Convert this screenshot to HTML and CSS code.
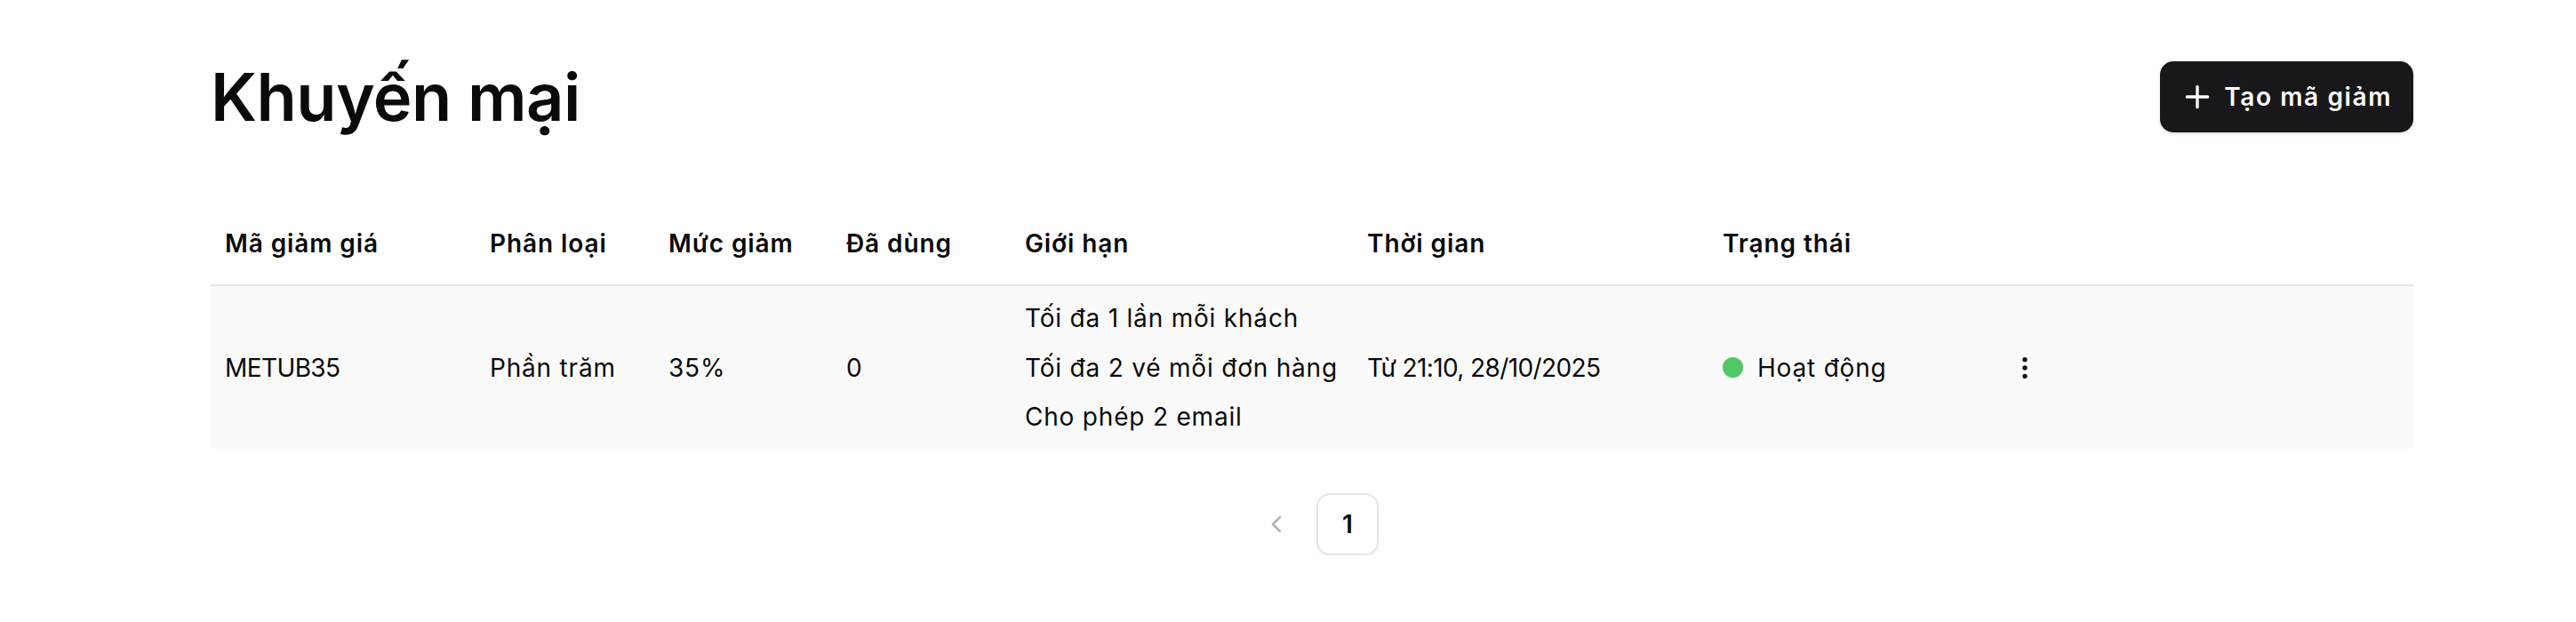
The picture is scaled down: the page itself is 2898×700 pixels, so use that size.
FILE: index.html
```html
<!DOCTYPE html>
<html lang="vi">
<head>
<meta charset="utf-8">
<title>Khuyến mại</title>
<link rel="stylesheet" href="styles.css">
</head>
<body>
<div class="page">
  <header class="top">
    <h1 class="title">Khuyến mại</h1>
    <button class="btn-primary" type="button">
      <svg class="btn-icon" viewBox="0 0 24 24" fill="none" stroke="currentColor" stroke-width="2" stroke-linecap="round" stroke-linejoin="round"><path d="M5 12h14"/><path d="M12 5v14"/></svg>
      <span>Tạo mã giảm</span>
    </button>
  </header>

  <div class="table">
    <div class="grid thead">
      <div class="th">Mã giảm giá</div>
      <div class="th">Phân loại</div>
      <div class="th">Mức giảm</div>
      <div class="th">Đã dùng</div>
      <div class="th">Giới hạn</div>
      <div class="th">Thời gian</div>
      <div class="th">Trạng thái</div>
      <div class="th"></div>
    </div>
    <div class="grid trow">
      <div class="td code">METUB35</div>
      <div class="td">Phần trăm</div>
      <div class="td">35%</div>
      <div class="td">0</div>
      <div class="td limits">
        <div class="limit">Tối đa 1 lần mỗi khách</div>
        <div class="limit">Tối đa 2 vé mỗi đơn hàng</div>
        <div class="limit">Cho phép 2 email</div>
      </div>
      <div class="td date">Từ 21:10, 28/10/2025</div>
      <div class="td status"><span class="dot"></span><span>Hoạt động</span></div>
      <div class="td actions">
        <svg class="more" viewBox="0 0 24 24" fill="none" stroke="currentColor" stroke-width="2" stroke-linecap="round" stroke-linejoin="round"><circle cx="12" cy="12" r="1"/><circle cx="12" cy="5" r="1"/><circle cx="12" cy="19" r="1"/></svg>
      </div>
    </div>
  </div>

  <nav class="pager">
    <button class="pg-btn pg-prev" type="button" aria-label="Trang trước">
      <svg viewBox="0 0 24 24" fill="none" stroke="currentColor" stroke-width="2" stroke-linecap="round" stroke-linejoin="round"><path d="m15 18-6-6 6-6"/></svg>
    </button>
    <button class="pg-btn pg-current" type="button">1</button>
  </nav>
</div>
</body>
</html>
```

FILE: styles.css
```css
* { box-sizing: border-box; }

html, body {
  margin: 0;
  background: #ffffff;
}

body {
  font-family: "Inter", "Noto Sans", sans-serif;
  color: #0a0a0a;
}

.page {
  width: 2715px;
  padding: 69px 0 0 237px;
}

.top {
  display: flex;
  align-items: center;
  justify-content: space-between;
  height: 79px;
  margin-bottom: 84px;
}

.title {
  margin: 0;
  font-size: 74px;
  font-weight: 600;
  line-height: 1;
  letter-spacing: -0.5px;
  color: #0a0a0a;
}

.btn-primary {
  display: flex;
  align-items: center;
  gap: 10px;
  height: 80px;
  padding: 0 24px 0 22px;
  border: none;
  border-radius: 15px;
  background: #18181a;
  color: #ffffff;
  font-family: inherit;
  font-size: 28px;
  font-weight: 600;
  letter-spacing: 1.6px;
  box-shadow: 0 2px 4px rgba(0, 0, 0, 0.12);
}

.btn-icon {
  width: 40px;
  height: 40px;
}

.grid {
  display: grid;
  grid-template-columns: 298px 201px 200px 201px 385px 400px 324px 1fr;
}

.thead {
  border-bottom: 2px solid #e5e5e5;
}

.th {
  padding: 22px 16px 26px;
  font-size: 28px;
  line-height: 40px;
  font-weight: 600;
  color: #0a0a0a;
  letter-spacing: 0.9px;
}

.trow {
  background: #fafafa;
}

.td {
  display: flex;
  align-items: center;
  padding: 16px;
  font-size: 28px;
  line-height: 40px;
  font-weight: 400;
  color: #0a0a0a;
  letter-spacing: 0.8px;
}

.code {
  letter-spacing: -0.6px;
}

.date {
  letter-spacing: -0.6px;
}

.limits {
  flex-direction: column;
  align-items: flex-start;
  gap: 15.5px;
}

.status {
  gap: 16px;
}

.dot {
  width: 23px;
  height: 23px;
  border-radius: 50%;
  background: #50c864;
  flex: none;
}

.more {
  width: 32px;
  height: 32px;
  color: #111111;
}

.pager {
  display: flex;
  justify-content: center;
  gap: 10px;
  margin-top: 50px;
}

.pg-btn {
  display: flex;
  align-items: center;
  justify-content: center;
  width: 70px;
  height: 70px;
  padding: 0;
  border: none;
  background: transparent;
  font-family: inherit;
}

.pg-prev {
  color: #b5b5b5;
}

.pg-prev svg {
  width: 32px;
  height: 32px;
}

.pg-current {
  border: 2px solid #e5e5e5;
  border-radius: 15px;
  background: #ffffff;
  box-shadow: 0 2px 4px rgba(0, 0, 0, 0.05);
  font-size: 28px;
  font-weight: 600;
  color: #0a0a0a;
}
```
